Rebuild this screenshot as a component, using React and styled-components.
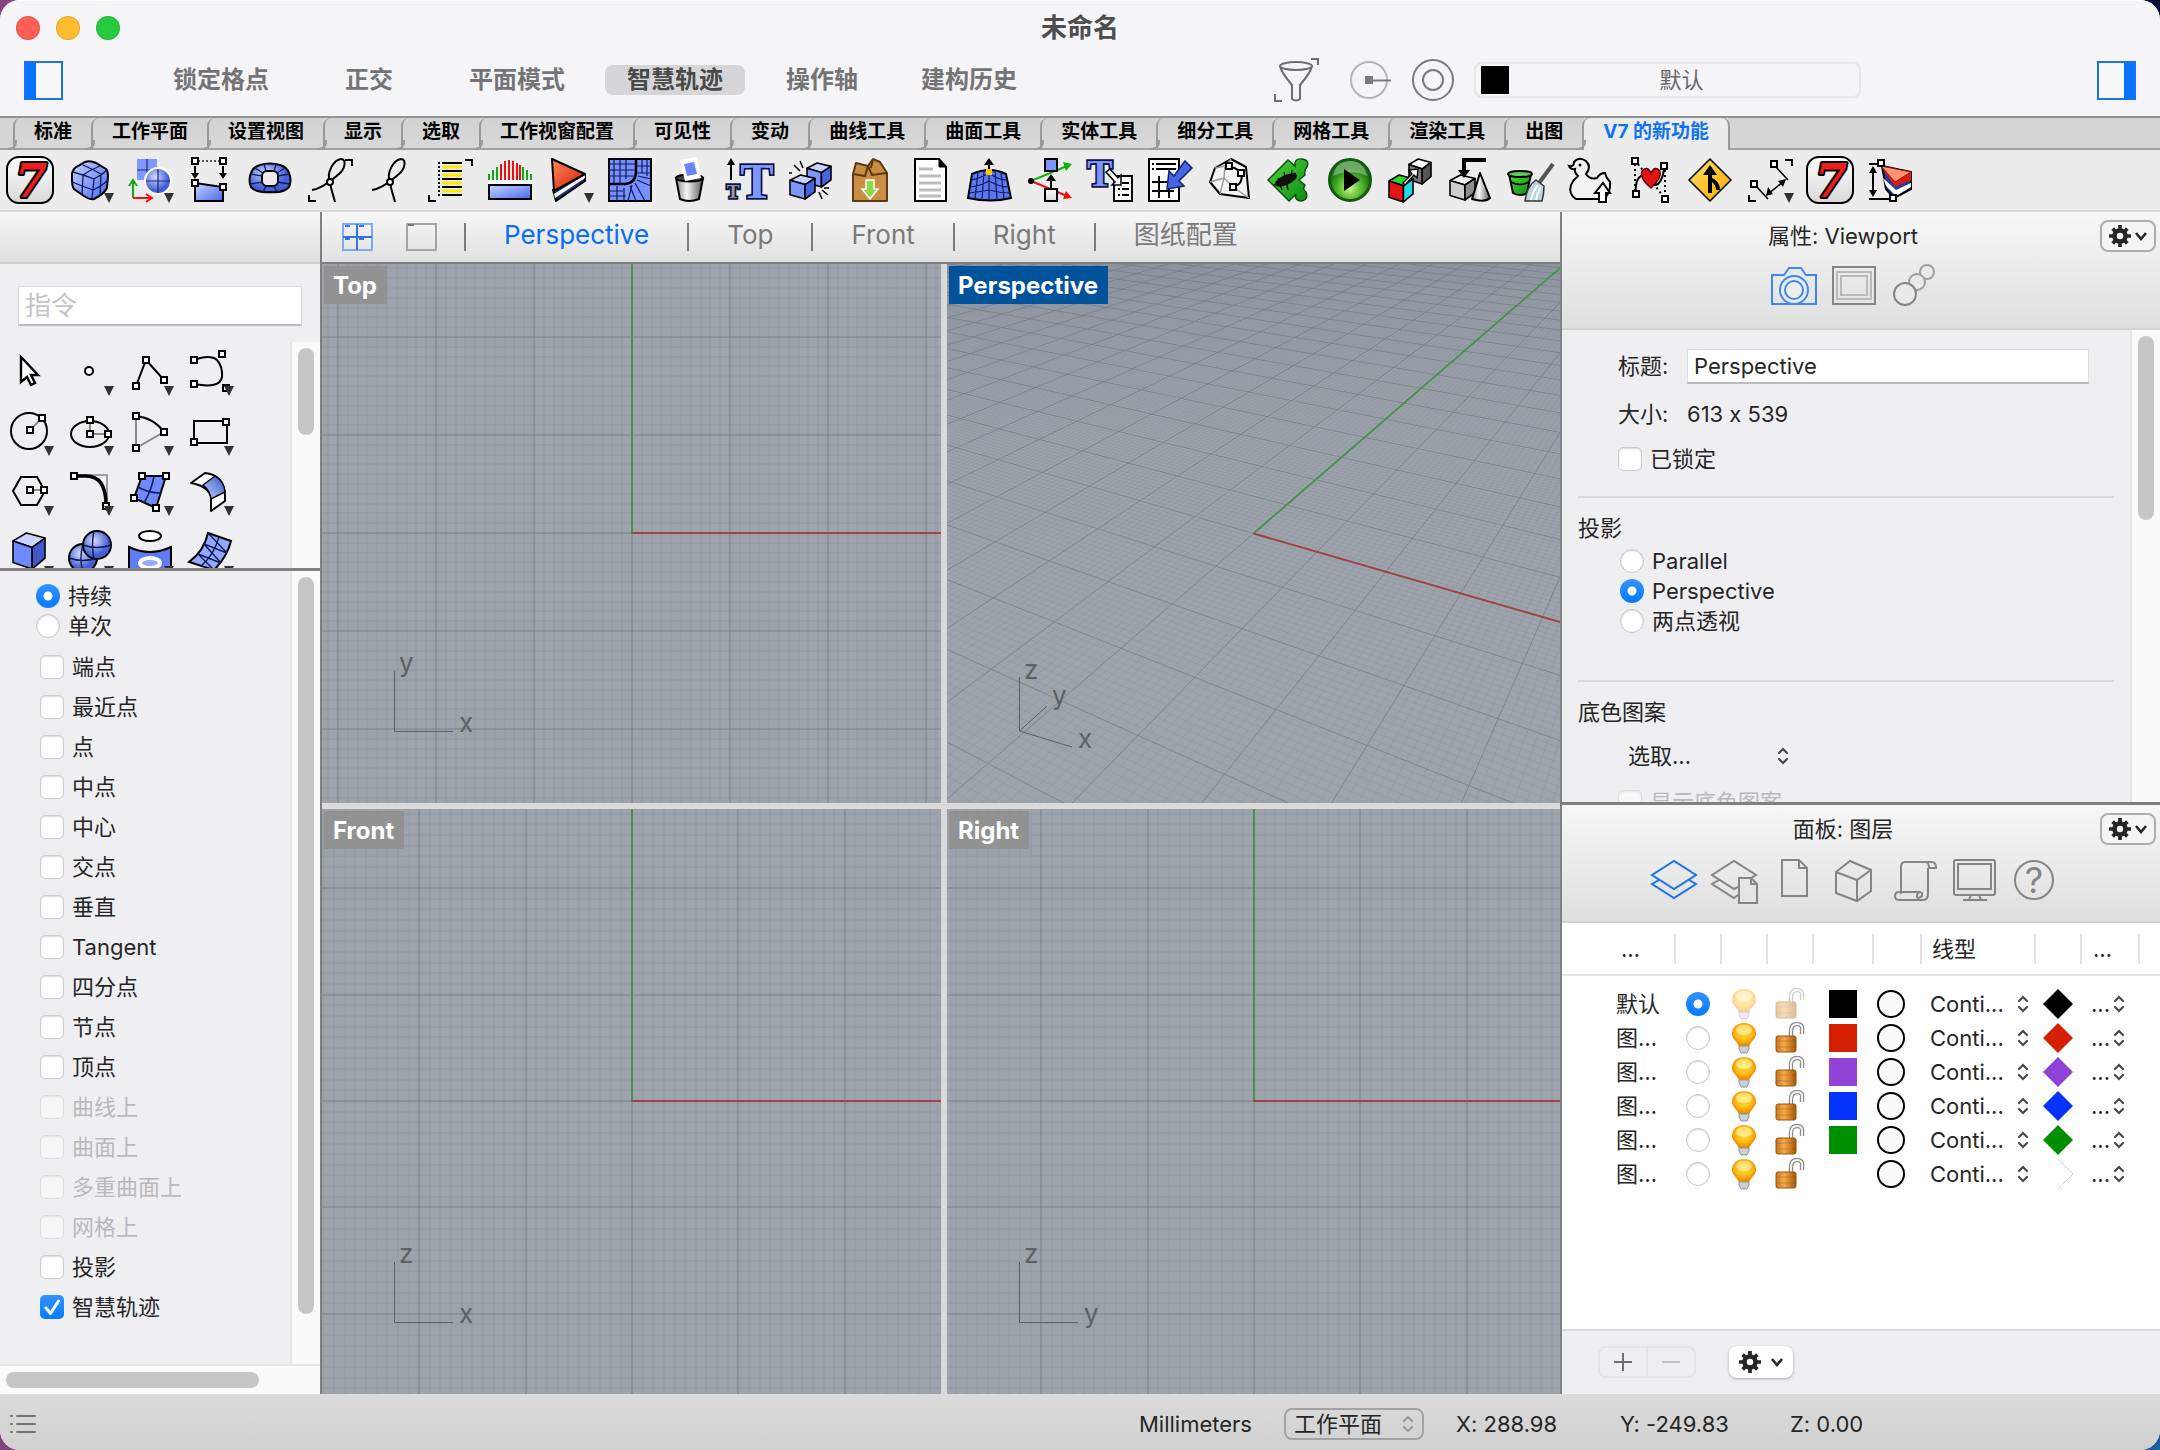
import { useId, useState } from "react";
import styled, { createGlobalStyle, css } from "styled-components";

const GlobalStyle = createGlobalStyle`
  * {
    box-sizing: border-box;
  }
  body {
    margin: 0;
    font-family: "Inter", "Noto Sans CJK SC", sans-serif;
    font-feature-settings: "calt" 0;
    font-size: 22px;
    line-height: 30px;
    color: #262626;
    background:
      radial-gradient(circle at 100% 100%, #1f6aa8 0, transparent 60px),
      linear-gradient(90deg, #84457f 50%, #0a0e38 50%);
  }
  button, input, select {
    font: inherit;
    color: inherit;
    margin: 0;
  }
  button {
    border: 0;
    padding: 0;
    background: none;
  }
`;

/* ---------- shell ---------- */

const Window = styled.div`
  min-height: 100vh;
  display: flex;
  flex-direction: column;
  border-radius: 20px;
  overflow: hidden;
  background: #efeff1;
`;

const TitleBar = styled.header`
  display: grid;
  grid-template-columns: 1fr auto 1fr;
  align-items: center;
  height: 54px;
  padding: 0 16px;
  background: #f5f4f7;
  border-top: 1px solid #fff;
`;

const Lights = styled.div`
  display: flex;
  gap: 16px;
`;

const Light = styled.button`
  width: 24px;
  height: 24px;
  border-radius: 50%;
  background: ${(props) => props.$color};
  box-shadow: inset 0 0 0 1px rgba(0, 0, 0, 0.1);
`;

const WindowTitle = styled.h1`
  margin: 0;
  font-size: 26px;
  font-weight: 700;
  color: #4d4d4d;
`;

const ModeBar = styled.div`
  display: flex;
  align-items: center;
  height: 62px;
  padding: 0 24px 10px;
  background: #f5f4f7;
`;

const PanelToggle = styled.button`
  width: 39px;
  height: 39px;
  border: 2px solid #1a73e8;
  background: linear-gradient(
    ${(props) => (props.$side === "left" ? "90deg" : "270deg")},
    #0a72ff 10px,
    #f8f8fa 10px
  );
`;

const Modes = styled.div`
  display: flex;
  gap: ${(props) => props.$gap};
  margin-left: ${(props) => props.$start};
`;

const ModeButton = styled.button`
  height: 30px;
  padding: 0 22px;
  border-radius: 8px;
  font-size: 24px;
  line-height: 28px;
  font-weight: 700;
  color: ${(props) => (props.$on ? "#4a4a4a" : "#747476")};
  background: ${(props) => (props.$on ? "#d6d6d8" : "transparent")};
`;

const ModeTools = styled.div`
  display: flex;
  align-items: center;
  gap: 20px;
  margin-left: auto;
  margin-right: 236px;

  > :first-child {
    margin-right: 10px;
  }
`;

const BareButton = styled.button`
  display: flex;
`;

const LayerField = styled.button`
  display: flex;
  align-items: center;
  width: 387px;
  height: 36px;
  padding: 0 5px;
  border: 2px solid #e6e6e9;
  border-radius: 8px;
  color: #68686a;

  span {
    flex: 1;
  }
`;

const Swatch = styled.i`
  display: block;
  width: 28px;
  height: 28px;
  background: ${(props) => props.$color};
`;

/* ---------- toolbar tabs ---------- */

const TabStrip = styled.nav`
  display: flex;
  height: 34px;
  padding-left: 13px;
  background: #d5d5d5;
  border-top: 2px solid #929292;
  box-shadow: inset 0 -2px #a0a0a0;
`;

const StripTab = styled.button`
  position: relative;
  height: 32px;
  padding: 0 19px 4px;
  font-size: 19px;
  font-weight: 700;
  line-height: 26px;
  color: ${(props) => (props.$on ? "#1273ef" : "#000")};
  border-left: 2px solid #999;
  border-top-left-radius: 8px;
  background: linear-gradient(#d2d2d2, #d8d8d8);
  box-shadow: inset 0 -2px #a0a0a0;

  &::before {
    content: "";
    position: absolute;
    left: -8px;
    bottom: 0;
    width: 8px;
    height: 8px;
    border: solid #999;
    border-width: 0 2px 2px 0;
    border-bottom-right-radius: 8px;
  }

  ${(props) =>
    props.$on &&
    css`
      background: #ececec;
      border-right: 2px solid #999;
      border-top-right-radius: 8px;
      box-shadow: none;
    `}
`;

const ToolStrip = styled.div`
  display: flex;
  height: 62px;
  padding: 6px 0 0 6px;
  gap: 12px;
  background: #ececec;
  border-bottom: 2px solid #d8d8d8;
`;

const IconSvg = styled.svg`
  display: block;
  width: 48px;
  height: 48px;
  overflow: visible;
`;

/* ---------- columns ---------- */

const Body = styled.div`
  flex: 1;
  display: flex;
  min-height: 0;
`;

const Sidebar = styled.aside`
  width: 322px;
  flex: none;
  display: flex;
  flex-direction: column;
  border-right: 2px solid #808080;
`;

const SidebarHead = styled.div`
  height: 52px;
  background: linear-gradient(#f7f7f7, #dfdfdf);
  border-bottom: 2px solid #cfcfcf;
`;

const CommandInput = styled.input`
  height: 40px;
  margin: 22px 18px 16px;
  padding: 0 6px;
  font-size: 26px;
  border: 1px solid #dcdcde;
  border-bottom: 2px solid #bcbcc0;
  background: #fff;
  outline: none;

  &::placeholder {
    color: #c4c4c6;
  }
`;

const ScrollArea = styled.div`
  display: flex;
  overflow: hidden;
  height: ${(props) => props.$height || "auto"};
  flex: ${(props) => (props.$height ? "none" : 1)};
`;

const ScrollBody = styled.div`
  flex: 1;
  min-width: 0;
`;

const Track = styled.div`
  width: 30px;
  padding: 6px 6px 0;
  border-left: 2px solid #e6e6e8;
  background: #fafafa;
`;

const Thumb = styled.div`
  width: 16px;
  height: ${(props) => props.$size};
  border-radius: 8px;
  background: #c6c6c6;
`;

const HorizontalTrack = styled.div`
  height: 30px;
  padding: 6px;
  border-top: 2px solid #e6e6e8;
  background: #fafafa;
`;

const HorizontalThumb = styled.div`
  width: 253px;
  height: 16px;
  border-radius: 8px;
  background: #c6c6c6;
`;

const ToolGrid = styled.div`
  display: grid;
  grid-template-columns: repeat(4, 48px);
  gap: 12px;
  padding: 5px 6px 0;
`;

const Divider = styled.div`
  height: 3px;
  flex: none;
  background: #808080;
`;

const SnapModes = styled.div`
  display: flex;
  flex-direction: column;
  padding: 10px 36px 6px;
`;

const SnapList = styled.div`
  display: flex;
  flex-direction: column;
  padding-left: 40px;
`;

/* ---------- form parts ---------- */

const Field = styled.label`
  display: flex;
  align-items: center;
  gap: 8px;
  height: ${(props) => props.$height || "30px"};
  color: ${(props) => (props.$dim ? "#b9b9bb" : "inherit")};
`;

const CheckBox = styled.input.attrs({ type: "checkbox" })`
  appearance: none;
  flex: none;
  width: 24px;
  height: 24px;
  border: 1px solid #cdcdcf;
  border-radius: 5px;
  background: #fff;
  box-shadow: inset 0 1px 2px rgba(0, 0, 0, 0.15);

  &:checked {
    border-color: transparent;
    box-shadow: none;
    background:
      url("data:image/svg+xml,%3Csvg xmlns='http://www.w3.org/2000/svg' viewBox='0 0 24 24'%3E%3Cpath d='M6 13l4.5 5.5L18.5 6' fill='none' stroke='white' stroke-width='3' stroke-linecap='round' stroke-linejoin='round'/%3E%3C/svg%3E"),
      linear-gradient(#3393ff, #067aff);
    background-origin: border-box;
  }

  &:disabled {
    opacity: 0.5;
  }
`;

const Radio = styled.input.attrs({ type: "radio" })`
  appearance: none;
  flex: none;
  width: 24px;
  height: 24px;
  border: 1px solid #c6c6c8;
  border-radius: 50%;
  background: #fff;
  box-shadow: inset 0 1px 2px rgba(0, 0, 0, 0.15);

  &:checked {
    border: 0;
    box-shadow: none;
    background: radial-gradient(circle, #fff 4px, transparent 5px),
      linear-gradient(#3393ff, #067aff);
  }
`;

const SelectBox = styled.div`
  display: flex;
  align-items: center;
  width: ${(props) => props.$width};
  height: 32px;

  select {
    appearance: none;
    flex: 1;
    min-width: 0;
    padding: 0;
    border: 0;
    outline: none;
    background: none;
  }

  svg {
    flex: none;
    pointer-events: none;
  }

  ${(props) =>
    props.$framed &&
    css`
      padding: 0 8px;
      border: 2px solid #a3a3a3;
      border-radius: 8px;
    `}
`;

const GearButton = styled.button`
  display: flex;
  align-items: center;
  justify-content: center;
  gap: ${(props) => (props.$raised ? "10px" : "4px")};
  width: ${(props) => (props.$raised ? "64px" : "56px")};
  height: 32px;
  border: ${(props) => (props.$raised ? "0" : "2px solid #adadad")};
  border-radius: 8px;
  background: ${(props) => (props.$raised ? "#fff" : "#f4f4f4")};
  box-shadow: ${(props) =>
    props.$raised ? "0 1px 3px rgba(0, 0, 0, 0.3)" : "none"};
`;

/* ---------- viewports ---------- */

const Center = styled.main`
  flex: 1;
  min-width: 0;
  display: flex;
  flex-direction: column;
`;

const ViewTabs = styled.nav`
  display: flex;
  align-items: center;
  height: 52px;
  padding-left: 20px;
  background: linear-gradient(#f7f7f7, #e1e1e1);
  border-bottom: 2px solid #808080;
`;

const LayoutButtons = styled.div`
  display: flex;
  gap: 33px;
  margin-right: 27px;
`;

const ViewTab = styled.button`
  height: 28px;
  padding: 0 38px 4px;
  border-left: 2px solid #7c7c7c;
  font-size: 26px;
  line-height: 20px;
  color: ${(props) => (props.$on ? "#0a6cf5" : "#7a7a7a")};
`;

const ViewGrid = styled.div`
  flex: 1;
  display: grid;
  grid-template-columns: 619fr 613fr;
  grid-template-rows: 539fr 585fr;
  gap: 6px;
  background: #dadada;
`;

const View = styled.section`
  position: relative;
  overflow: hidden;
  background: #9da3ab;

  > svg {
    position: absolute;
    inset: 0;
    width: 100%;
    height: 100%;
  }
`;

const ViewLabel = styled.h2`
  position: absolute;
  top: 2px;
  left: 2px;
  margin: 0;
  padding: 2px 10px 0 9px;
  font-size: 24px;
  line-height: 36px;
  font-weight: 700;
  color: #fff;
  background: ${(props) => (props.$on ? "#00529b" : "#929292")};
`;

const AxisText = styled.text`
  font-size: 26px;
  fill: #5d6065;
`;

/* ---------- right panels ---------- */

const Inspector = styled.aside`
  width: 600px;
  flex: none;
  display: flex;
  flex-direction: column;
  border-left: 2px solid #808080;
`;

const PanelHead = styled.div`
  flex: none;
  height: 118px;
  padding: 8px 4px 0 0;
  background: linear-gradient(#f7f7f7, #dfdfdf);
  border-bottom: 2px solid #d3d3d3;
`;

const PanelTitle = styled.div`
  display: flex;
  align-items: center;

  h2 {
    flex: 1;
    margin: 0;
    padding-left: 24px;
    text-align: center;
    font-size: 22px;
    font-weight: 400;
  }
`;

const PanelIcons = styled.div`
  display: flex;
  justify-content: center;
  gap: 12px;
  padding: 10px 10px 0 0;

  svg {
    fill: none;
    stroke: #858585;
    stroke-width: 2;
  }
`;

const Properties = styled.div`
  padding: 18px 16px 0;
`;

const PropRow = styled.div`
  display: grid;
  grid-template-columns: 69px 402px;
  align-items: center;
  height: ${(props) => props.$height};
  padding-left: 40px;
`;

const TextField = styled.input`
  height: 35px;
  padding: 0 6px;
  border: 1px solid #dedee0;
  border-bottom: 2px solid #bcbcc0;
  background: #fff;
  outline: none;
`;

const Indent = styled.div`
  display: flex;
  flex-direction: column;
  padding: ${(props) => props.$pad || "0 0 0 40px"};
`;

const Rule = styled.hr`
  width: 536px;
  margin: ${(props) => props.$margin};
  border: 0;
  border-top: 2px solid #d9d9db;
`;

const LayerPane = styled.div`
  flex: 1;
  background: #fff;
`;

const LayerTable = styled.table`
  width: 100%;
  table-layout: fixed;
  border-collapse: collapse;

  th {
    height: 52px;
    padding: 0;
    font-weight: 400;
    text-align: left;
    border-bottom: 2px solid #e2e2e2;
  }

  td {
    height: 34px;
    padding: 0;
    line-height: 28px;
    text-align: center;
    vertical-align: middle;
    white-space: nowrap;
  }

  thead + tbody::before {
    content: "";
    display: block;
    height: 11px;
  }
`;

const HeadCell = styled.div`
  height: 30px;
  padding-left: ${(props) => props.$pad || "0"};
  border-right: 2px solid #e3e3e3;
`;

const CellBox = styled.div`
  display: flex;
  align-items: center;
  justify-content: ${(props) => props.$align || "center"};
  padding-left: ${(props) => props.$pad || "0"};
  padding-right: 2px;
`;

const PrintDot = styled.i`
  display: block;
  width: 28px;
  height: 28px;
  border: 2px solid #000;
  border-radius: 50%;
  background: #fafafa;
`;

const PaneFoot = styled.div`
  display: flex;
  align-items: center;
  gap: 33px;
  height: 65px;
  padding: 0 0 2px 36px;
  border-top: 2px solid #d9d9db;
`;

const StepGroup = styled.div`
  display: flex;
  width: 98px;
  height: 32px;
  border: 2px solid #e3e3e5;
  border-radius: 8px;

  button {
    flex: 1;
    display: flex;
    align-items: center;
    justify-content: center;
  }

  button + button {
    border-left: 2px solid #e3e3e5;
  }
`;

const StatusBar = styled.footer`
  display: flex;
  align-items: center;
  height: 56px;
  padding: 4px 0 0 10px;
  background: linear-gradient(#dbdbdb, #d1d1d1);
`;

const StatusInfo = styled.div`
  display: flex;
  align-items: center;
  gap: 32px;
  margin-left: auto;
  width: 1021px;
`;

const Coord = styled.output`
  width: ${(props) => props.$width};
`;

/* ---------- shared drawing bits ---------- */

const Paints = () => (
  <svg width="0" height="0" style={{ position: "absolute" }} aria-hidden="true">
    <defs>
      <linearGradient id="blue" x1="0" y1="0" x2="1" y2="1">
        <stop offset="0" stopColor="#c9d4ff" />
        <stop offset="1" stopColor="#4a68ee" />
      </linearGradient>
      <linearGradient id="blueRev" x1="1" y1="0" x2="0" y2="1">
        <stop offset="0" stopColor="#3450c8" />
        <stop offset="1" stopColor="#cdd8ff" />
      </linearGradient>
      <linearGradient id="steel" x1="0" y1="0" x2="1" y2="0">
        <stop offset="0" stopColor="#8a8a8a" />
        <stop offset="0.4" stopColor="#f6f6f6" />
        <stop offset="1" stopColor="#5a5a5a" />
      </linearGradient>
      <linearGradient id="paper" x1="0" y1="0" x2="0" y2="1">
        <stop offset="0" stopColor="#fff" />
        <stop offset="1" stopColor="#d8d8d8" />
      </linearGradient>
      <linearGradient id="red" x1="0" y1="0" x2="1" y2="1">
        <stop offset="0" stopColor="#ff8a5c" />
        <stop offset="1" stopColor="#d81800" />
      </linearGradient>
      <linearGradient id="green" x1="0" y1="0" x2="1" y2="1">
        <stop offset="0" stopColor="#4fd83a" />
        <stop offset="1" stopColor="#0c8a12" />
      </linearGradient>
      <radialGradient id="play" cx="0.5" cy="0.7">
        <stop offset="0" stopColor="#c8f58a" />
        <stop offset="0.6" stopColor="#4fb52c" />
        <stop offset="1" stopColor="#1b7a12" />
      </radialGradient>
      <radialGradient id="ball" cx="0.4" cy="0.35">
        <stop offset="0" stopColor="#d5deff" />
        <stop offset="1" stopColor="#4560d6" />
      </radialGradient>
      <linearGradient id="sign" x1="0" y1="0" x2="1" y2="1">
        <stop offset="0" stopColor="#ffe066" />
        <stop offset="1" stopColor="#f5a800" />
      </linearGradient>
      <radialGradient id="bulb" cx="0.5" cy="0.4">
        <stop offset="0" stopColor="#ffe14d" />
        <stop offset="0.7" stopColor="#fdb813" />
        <stop offset="1" stopColor="#f08c00" />
      </radialGradient>
      <linearGradient id="brass" x1="0" y1="0" x2="1" y2="0">
        <stop offset="0" stopColor="#c8741a" />
        <stop offset="0.4" stopColor="#f3ac4c" />
        <stop offset="1" stopColor="#a85608" />
      </linearGradient>
    </defs>
  </svg>
);

const Drop = ({ y = 37 }) => (
  <path d={`M38 ${y}h10l-5 10z`} fill="#333" stroke="none" />
);

const Node = ({ x, y }) => (
  <rect
    x={x - 3}
    y={y - 3}
    width="6"
    height="6"
    fill="#fff"
    stroke="#000"
    strokeWidth="2"
  />
);

const Brackets = () => (
  <path d="M39 4h7v6M3 39v6h7" fill="none" stroke="#000" strokeWidth="2" />
);

const Cube = ({ x, y, w, h, top = "#c9d4ff", left = "#7d95ff", right = "#4862e0" }) => (
  <g stroke="#000" strokeWidth="1.6" strokeLinejoin="round">
    <path
      d={`M${x} ${y + h * 0.22}L${x + w * 0.42} ${y}L${x + w} ${y + h * 0.14}L${x + w * 0.6} ${y + h * 0.4}z`}
      fill={top}
    />
    <path
      d={`M${x} ${y + h * 0.22}L${x + w * 0.6} ${y + h * 0.4}V${y + h}L${x} ${y + h * 0.82}z`}
      fill={left}
    />
    <path
      d={`M${x + w * 0.6} ${y + h * 0.4}L${x + w} ${y + h * 0.14}V${y + h * 0.7}L${x + w * 0.6} ${y + h}z`}
      fill={right}
    />
  </g>
);

const Letter = ({ x, y, size, fill, children }) => (
  <text
    x={x}
    y={y}
    fontSize={size}
    fontFamily="'Liberation Serif', serif"
    fontWeight="700"
    textAnchor="middle"
    fill={fill}
    stroke="#0b1440"
    strokeWidth="3.4"
    paintOrder="stroke"
  >
    {children}
  </text>
);

const Seven = () => (
  <>
    <rect x="1" y="1" width="46" height="46" rx="12" fill="url(#paper)" stroke="#000" strokeWidth="2" />
    <text
      x="25"
      y="41"
      fontSize="46"
      fontFamily="'DejaVu Serif', serif"
      fontStyle="italic"
      fontWeight="700"
      textAnchor="middle"
      fill="#ee1c1c"
      stroke="#000"
      strokeWidth="4"
      strokeLinejoin="round"
      paintOrder="stroke"
    >
      7
    </text>
  </>
);

const Leaf = () => (
  <>
    <path
      d="M24 26C20 16 28 4 35 3C41 3 39 13 33 18C28 22 18 32 6 34M24 26C25 34 27 38 29 46"
      fill="none"
      stroke="#000"
      strokeWidth="2"
    />
    <circle cx="24" cy="26" r="3" fill="#fff" stroke="#000" strokeWidth="2" />
  </>
);

/* ---------- toolbar icons, each on a 48 unit square ---------- */

const toolIcons = [
  ["V7", <Seven />],
  [
    "SubD box",
    <>
      <path
        d="M6 18Q7 12 12 10L19 6Q24 4 30 7L40 13Q42 15 42 20L41 32Q38 38 28 43Q24 44 18 40L8 33Q6 30 6 24z"
        fill="url(#blue)"
        stroke="#000"
        strokeWidth="2"
      />
      <path
        d="M7 16Q18 19 28 23Q36 19 41 14M28 23L26 43M15 8Q24 12 35 18L34 40M34 10Q24 14 17 19L16 39M6 26Q16 30 27 34Q36 30 42 24"
        fill="none"
        stroke="#0d1c60"
        strokeWidth="1.3"
      />
      <Drop />
    </>,
  ],
  [
    "Gumball",
    <>
      <rect x="11" y="3" width="20" height="21" fill="#7f98ff" />
      <path d="M11 14h20M21 3v21" stroke="#1a2a7a" strokeWidth="1.2" />
      <circle cx="32" cy="25" r="13" fill="url(#ball)" stroke="#fff" strokeWidth="2" />
      <path d="M20 25h24M32 13v24" stroke="#1a2a7a" strokeWidth="1.2" />
      <path d="M7 42V25M3 30l4-6 4 6" fill="none" stroke="#14a814" strokeWidth="2" />
      <path d="M7 42h18M20 38l6 4-6 4" fill="none" stroke="#f01010" strokeWidth="2" />
      <Drop />
    </>,
  ],
  [
    "Extrude to boundary",
    <>
      <path d="M12 5h22" stroke="#555" strokeWidth="2" strokeDasharray="2 2" />
      <path d="M9 10v10M37 10v10" stroke="#000" strokeWidth="2" />
      <path d="M5 17h8l-4 6zM33 17h8l-4 6z" />
      <path d="M9 27L37 31V45H9z" fill="url(#blue)" stroke="#000" strokeWidth="2" />
      <Node x={9} y={5} />
      <Node x={37} y={5} />
      <Node x={9} y={27} />
      <Node x={37} y={31} />
    </>,
  ],
  [
    "Ring",
    <>
      <path
        d="M14 9Q24 6 34 9Q41 11 43 17Q46 24 43 31Q38 37 24 36Q10 37 5 31Q2 24 5 17Q7 11 14 9z"
        fill="url(#ball)"
        stroke="#000"
        strokeWidth="2"
      />
      <rect x="16" y="15" width="16" height="15" rx="5" fill="#ececec" stroke="#000" strokeWidth="2" />
      <path
        d="M18 8l2 7M30 8l-2 7M5 18l11 2M43 18l-11 2M4 28l13-2M44 28l-13-2M17 36l3-6M31 36l-3-6M9 12l8 5M39 12l-8 5"
        stroke="#0d1c60"
        strokeWidth="1.3"
      />
    </>,
  ],
  [
    "Select curve",
    <>
      <Leaf />
      <Brackets />
    </>,
  ],
  ["Curve", <Leaf />],
  [
    "Select list",
    <>
      <path d="M16 7h20M16 15h20M16 23h20M16 31h20M16 39h20" stroke="#000" strokeWidth="2" />
      <path d="M16 11h20M16 19h20M16 27h20M16 35h20" stroke="#ffe800" strokeWidth="3" />
      <path d="M13 6v35" stroke="#000" strokeWidth="2" strokeDasharray="2 2" />
      <Brackets />
    </>,
  ],
  [
    "Curvature",
    <>
      <path d="M3 24v-6M7 24V14M11 24V11M37 24V11M41 24V14M45 24v-6" stroke="#12a812" strokeWidth="2" />
      <path d="M15 24V8M19 24V5M23 24V4M27 24V5M31 24V7M34 24V9" stroke="#ee1010" strokeWidth="2" />
      <rect x="2" y="24" width="44" height="4" fill="#fff" />
      <rect x="3" y="29" width="42" height="14" fill="url(#blue)" stroke="#000" strokeWidth="2" />
    </>,
  ],
  [
    "Draft",
    <>
      <path d="M7 34L10 45L39 25V18z" fill="#1b2e8a" stroke="#000" strokeWidth="2" strokeLinejoin="round" />
      <path d="M8 38L9 42L39 22V19z" fill="#fff" />
      <path d="M6 3L39 18L8 35z" fill="url(#red)" stroke="#000" strokeWidth="2" strokeLinejoin="round" />
      <Drop />
    </>,
  ],
  [
    "Fillet surface",
    <>
      <rect x="3" y="3" width="42" height="42" fill="#7690ff" stroke="#000" strokeWidth="2" />
      <path
        d="M8 3v25M14 3v24M20 3v20M3 8h26M3 14h26M3 20h25M36 3v14M41 3v17M31 10h14M31 17h14M3 35h14M3 40h17M11 30v15M18 32v13M26 29l-4 16M31 24l14 6M29 27l10 18M32 20l13 3M24 30l6 15"
        stroke="#101c58"
        strokeWidth="1.2"
        fill="none"
      />
      <path d="M3 28h16Q30 27 30 15V3" fill="none" stroke="#000" strokeWidth="2.5" />
    </>,
  ],
  [
    "Purge",
    <>
      <path d="M10 22l4 21q9 4 19 0l4-21z" fill="url(#steel)" stroke="#000" strokeWidth="2" />
      <ellipse cx="23.5" cy="22" rx="13.5" ry="3.5" fill="#444" stroke="#000" strokeWidth="2" />
      <path d="M14 4L31 1L35 22L19 25z" fill="#fff" />
      <path d="M18 8L28 6L31 18L21 20z" fill="#6a86ff" />
    </>,
  ],
  [
    "Text height",
    <>
      <path d="M5 24V5" stroke="#000" strokeWidth="2" />
      <path d="M1 9h8L5 2z" />
      <Letter x={31} y={42} size={50} fill="#7d95ff">T</Letter>
      <Letter x={7} y={42} size={19} fill="#999">T</Letter>
    </>,
  ],
  [
    "Explode block",
    <>
      <Cube x={21} y={7} w={24} h={24} />
      <Cube x={4} y={19} w={25} h={24} />
      <path d="M14 15L8 9M17 12L14 5M6 17H3M33 36l3 7M36 34l6 5M38 32h5" stroke="#000" strokeWidth="1.5" />
    </>,
  ],
  [
    "Package",
    <>
      <path d="M7 18L10 7L22 10L27 3L34 6L41 17V45H7z" fill="#c98e43" stroke="#5a3a10" strokeWidth="2" strokeLinejoin="round" />
      <path d="M7 18L19 20L22 10M22 10L26 19L41 17M27 3L25 12" fill="none" stroke="#5a3a10" strokeWidth="2" />
      <path d="M20 24h8v9h4l-8 10-8-10h4z" fill="#8ed84a" stroke="#fff" strokeWidth="1.5" />
    </>,
  ],
  [
    "Document",
    <>
      <path d="M9 3h24l7 8v34H9z" fill="#fff" stroke="#000" strokeWidth="2" />
      <path d="M33 3v8h7z" stroke="#000" />
      <path d="M13 13h14M13 20h22M13 27h22M13 34h22M13 40h22" stroke="#bdbdbd" strokeWidth="3" />
    </>,
  ],
  [
    "Push pull",
    <>
      <path d="M6 18q18-8 34 0l5 24q-20 5-43 0z" fill="#5a76f0" stroke="#000" strokeWidth="2" />
      <path
        d="M5 24q8-1 18-7q9 7 19 7M4 31q10-1 19-6q10 6 20 6M3 37q10-1 20-3q11 3 21 3M12 16L9 43M18 15l-2 29M23 15v29M29 15l2 29M35 16l3 27"
        fill="none"
        stroke="#101c58"
        strokeWidth="1.2"
      />
      <path d="M23 13V6" stroke="#000" strokeWidth="2" />
      <path d="M18 9h10l-5-7z" />
      <rect x="20" y="13" width="6" height="6" fill="#ffc400" />
    </>,
  ],
  [
    "Orient",
    <>
      <path d="M5 25L41 10" stroke="#12b012" strokeWidth="2" />
      <path d="M37 6l9 2-6 7z" fill="#12b012" />
      <path d="M5 25L41 40" stroke="#f01010" strokeWidth="2" />
      <path d="M40 35l6 7-9 1z" fill="#f01010" />
      <path d="M25 33V23" stroke="#000" strokeWidth="2" />
      <path d="M20 25h10l-5-7z" />
      <rect x="19" y="3" width="12" height="12" fill="#7d95ff" stroke="#000" strokeWidth="2" />
      <rect x="19" y="33" width="12" height="12" fill="url(#paper)" stroke="#000" strokeWidth="2" />
      <circle cx="5" cy="25" r="3" />
    </>,
  ],
  [
    "Text properties",
    <>
      <Letter x={14} y={30} size={38} fill="#7d95ff">T</Letter>
      <rect x="28" y="20" width="18" height="25" fill="#fff" stroke="#000" strokeWidth="2" />
      <path d="M32 27h2M36 27h7M32 33h2M36 33h7M32 39h2M36 39h7" stroke="#000" strokeWidth="2" />
      <path d="M20 16l4-3 8 9 3-3v10h-9l3-3z" fill="#fff" stroke="#000" strokeWidth="1.5" />
    </>,
  ],
  [
    "Hatch layout",
    <>
      <rect x="3" y="3" width="30" height="42" fill="#fff" stroke="#000" strokeWidth="2" />
      <path d="M6 8h2M10 8h20M6 13h2M10 13h20" stroke="#000" strokeWidth="2" />
      <path d="M6 26h22M6 35h22M13 20v22M23 20v22" stroke="#000" strokeWidth="2" />
      <path d="M39 5l7 7-13 13 5 5-17 3 2-18 5 5z" fill="#4666e8" stroke="#14256e" strokeWidth="1.5" />
    </>,
  ],
  [
    "Mesh",
    <>
      <path
        d="M9 12L25 3L40 11L43 42L14 38L4 26z"
        fill="#f4f4f4"
        stroke="#000"
        strokeWidth="2"
        strokeLinejoin="round"
      />
      <path d="M9 12L19 10L25 3M4 26L18 22L14 38M19 10L18 22L27 31L43 42" fill="none" stroke="#999" strokeWidth="1.4" />
      <path d="M23 11Q30 11 35 17M35 17Q38 28 27 31" fill="none" stroke="#000" strokeWidth="2" />
      <Node x={23} y={10} />
      <Node x={35} y={17} />
      <Node x={27} y={31} />
    </>,
  ],
  [
    "Plug-in",
    <>
      <path
        d="M2 24L22 4L29 10Q28 2 36 3Q44 4 41 11Q38 14 39 19L33 24L39 29Q36 33 40 36Q43 44 35 45Q28 44 30 38L23 45L16 38L10 32z"
        fill="url(#green)"
        stroke="#0a4a0a"
        strokeWidth="1.4"
      />
      <ellipse cx="20" cy="24" rx="12" ry="5" transform="rotate(-25 20 24)" fill="#111" />
      <path d="M12 22l4 12M18 16l4 18M26 14l-1 12M8 29l22-12" stroke="#111" strokeWidth="1.4" />
    </>,
  ],
  [
    "Run",
    <>
      <circle cx="24" cy="24" r="20.5" fill="url(#play)" stroke="#145a10" strokeWidth="3" />
      <path d="M7 20Q10 5 24 5Q38 5 41 20Q24 12 7 20z" fill="#fff" opacity="0.35" />
      <path d="M18 13L34 24L18 35z" />
    </>,
  ],
  [
    "Match mapping",
    <>
      <Cube x={23} y={3} w={22} h={25} top="#fff" left="#777" right="#555" />
      <Cube x={3} y={19} w={24} h={27} top="#2ad82a" left="#e81414" right="#22d8e8" />
      <path d="M17 27l9-9-3-4 9-1-1 9-3-3-9 10z" fill="#fff" stroke="#000" strokeWidth="1.4" />
    </>,
  ],
  [
    "Paste solids",
    <>
      <Cube x={4} y={19} w={25} h={25} top="#f2f2f2" left="#cfcfcf" right="#8f8f8f" />
      <path d="M34 17L44 42Q39 47 26 43z" fill="url(#steel)" stroke="#000" strokeWidth="2" strokeLinejoin="round" />
      <path d="M40 4H18V16" fill="none" stroke="#000" strokeWidth="4" />
      <path d="M12 14h12l-6 8z" />
    </>,
  ],
  [
    "Paint",
    <>
      <path d="M3 18L7 37Q14 41 21 37L25 18z" fill="url(#green)" stroke="#000" strokeWidth="2" />
      <ellipse cx="14" cy="18" rx="12" ry="3" fill="#58d058" stroke="#000" strokeWidth="2" />
      <path d="M5 26q9 5 18 0" fill="none" stroke="#000" strokeWidth="1.5" />
      <path d="M47 8L33 27" stroke="#555" strokeWidth="4" />
      <path d="M30 24l8 6q0 8-2 15H19q2-15 11-21z" fill="#b9d4da" stroke="#333" strokeWidth="1.5" />
      <path d="M32 29q-5 6-7 15M35 31q-4 6-5 13" fill="none" stroke="#fff" strokeWidth="2" />
    </>,
  ],
  [
    "Export model",
    <>
      <path
        d="M3 10Q8 11 8 6Q13 0 20 5Q26 11 20 18Q24 24 31 22Q34 17 39 17Q40 22 44 26Q45 36 38 43H10Q2 38 5 29Q7 24 12 20Q8 16 9 13Q5 14 3 10z"
        fill="#f2f2f2"
        stroke="#000"
        strokeWidth="2"
      />
      <circle cx="14" cy="9" r="1.5" />
      <path d="M37 27l7 10h-4v9h-7v-9h-4z" fill="#fff" stroke="#000" strokeWidth="2" />
    </>,
  ],
  [
    "Match curve",
    <>
      <path d="M9 8v26M12 8L37 40M39 14v26" stroke="#000" strokeWidth="2" strokeDasharray="2 3" />
      <path d="M10 38Q8 20 20 18Q24 32 32 28Q38 22 38 10" fill="none" stroke="#000" strokeWidth="2" />
      <path d="M25 32Q13 22 16 15Q21 9 25 17Q29 9 34 15Q36 22 25 32z" fill="#e01414" stroke="#500" strokeWidth="1.4" />
      <Node x={9} y={5} />
      <Node x={38} y={10} />
      <Node x={10} y={38} />
      <Node x={39} y={43} />
    </>,
  ],
  [
    "Merge",
    <>
      <path d="M24 3L45 24L24 45L3 24z" fill="url(#sign)" stroke="#000" strokeWidth="1.6" strokeLinejoin="round" />
      <path d="M24 37V16M32 34Q32 26 24 23" fill="none" stroke="#000" strokeWidth="4" />
      <path d="M17 19h14l-7-10z" />
    </>,
  ],
  [
    "Distance",
    <>
      <path d="M30 11L42 24M10 30L22 43M38 25L22 38" stroke="#000" strokeWidth="1.6" fill="none" />
      <path d="M40 23l-8 2 5 6zM20 40l2-9 5 7z" />
      <Node x={28} y={8} />
      <Node x={8} y={28} />
      <Brackets />
      <Drop />
    </>,
  ],
  ["V7", <Seven />],
  [
    "Section",
    <>
      <path d="M3 8h11M3 43h22M7 14v23" stroke="#000" strokeWidth="2" />
      <path d="M3 17l4-7 4 7zM3 34l4 7 4-7z" />
      <path d="M16 10L20 33L28 42L45 33V16z" fill="#1b3fa8" stroke="#000" strokeWidth="2" strokeLinejoin="round" />
      <path d="M17 22L30 34L45 27V31L30 40L20 30z" fill="#fff" />
      <path d="M16 12L29 31L45 24V16z" fill="#dc1c0c" />
      <path d="M15 10L45 16L29 26z" fill="#ff9470" stroke="#a81000" strokeWidth="1" />
      <Node x={15} y={7} />
      <Node x={27} y={42} />
    </>,
  ],
];

/* ---------- sidebar tool icons ---------- */

const sideIcons = [
  ["Select", false, <path d="M15 10v25l6-5 4 8 4-2-4-8h7z" fill="#fff" stroke="#000" strokeWidth="2.4" />],
  ["Point", true, <circle cx="23" cy="24" r="4" fill="#fff" stroke="#000" strokeWidth="2" />],
  [
    "Polyline",
    true,
    <>
      <path d="M10 39L20 13L38 33" fill="none" stroke="#000" strokeWidth="2" />
      <Node x={10} y={39} />
      <Node x={20} y={13} />
      <Node x={38} y={33} />
    </>,
  ],
  [
    "Curve",
    true,
    <>
      <path d="M8 13Q24 7 31 13Q37 20 36 30Q34 42 8 37" fill="none" stroke="#000" strokeWidth="2" />
      <Node x={8} y={13} />
      <Node x={36} y={7} />
      <Node x={8} y={37} />
      <Node x={40} y={41} />
    </>,
  ],
  [
    "Circle",
    true,
    <>
      <circle cx="23" cy="24" r="18" fill="none" stroke="#000" strokeWidth="2" />
      <path d="M24 23L36 11" stroke="#888" strokeWidth="2" />
      <Node x={24} y={23} />
      <Node x={36} y={11} />
    </>,
  ],
  [
    "Ellipse",
    true,
    <>
      <ellipse cx="24" cy="27" rx="19" ry="13" fill="none" stroke="#000" strokeWidth="2" />
      <path d="M24 13v14h18" fill="none" stroke="#888" strokeWidth="2" />
      <Node x={24} y={13} />
      <Node x={24} y={27} />
      <Node x={42} y={27} />
    </>,
  ],
  [
    "Arc",
    true,
    <>
      <path d="M10 9v32l28-16" fill="none" stroke="#888" strokeWidth="2" />
      <path d="M10 9Q28 11 38 25" fill="none" stroke="#000" strokeWidth="2" />
      <Node x={10} y={9} />
      <Node x={10} y={41} />
      <Node x={38} y={25} />
    </>,
  ],
  [
    "Rectangle",
    true,
    <>
      <rect x="8" y="14" width="33" height="22" fill="none" stroke="#000" strokeWidth="2" />
      <Node x={8} y={35} />
      <Node x={40} y={15} />
    </>,
  ],
  [
    "Polygon",
    true,
    <>
      <path d="M7 24L15 10H31L39 24L31 38H15z" fill="none" stroke="#000" strokeWidth="2" />
      <path d="M24 23h14" stroke="#888" strokeWidth="2" />
      <Node x={24} y={23} />
      <Node x={38} y={23} />
    </>,
  ],
  [
    "Fillet",
    true,
    <>
      <path d="M8 8h33v32" fill="none" stroke="#888" strokeWidth="1.6" />
      <path d="M8 9H20Q40 9 40 38" fill="none" stroke="#000" strokeWidth="3.5" />
      <Node x={8} y={9} />
      <Node x={40} y={39} />
    </>,
  ],
  [
    "Surface from points",
    true,
    <>
      <path d="M16 9H40L30 41L8 31z" fill="#6f8aff" stroke="#000" strokeWidth="2" />
      <path d="M28 9Q26 22 18 36M12 20Q22 26 35 26" fill="none" stroke="#101c58" strokeWidth="1.6" />
      <Node x={16} y={9} />
      <Node x={40} y={9} />
      <Node x={8} y={31} />
      <Node x={30} y={41} />
    </>,
  ],
  [
    "Loft",
    true,
    <>
      <path d="M5 16L19 6Q38 8 39 28V34L25 44V30Q22 19 5 16z" fill="#fff" stroke="#000" strokeWidth="2" strokeLinejoin="round" />
      <path d="M17 18L29 9Q38 14 39 25L25 32Q24 23 17 18z" fill="url(#blueRev)" stroke="#000" strokeWidth="1.4" />
    </>,
  ],
  ["Box", true, <Cube x={7} y={6} w={32} h={36} left="#6f8aff" right="#3f58cc" />],
  [
    "Sphere union",
    true,
    <>
      <circle cx="17" cy="31" r="14" fill="url(#ball)" stroke="#000" strokeWidth="2" />
      <path d="M3 31q14 5 28 0M17 17q-4 14 0 28" fill="none" stroke="#101c58" strokeWidth="1.4" />
      <circle cx="31" cy="18" r="14" fill="url(#ball)" stroke="#000" strokeWidth="2" />
      <path d="M17 18q14 5 28 0M28 4q-3 14 0 28" fill="none" stroke="#101c58" strokeWidth="1.4" />
    </>,
  ],
  [
    "Project",
    true,
    <>
      <ellipse cx="24" cy="9" rx="11" ry="5" fill="#fff" stroke="#000" strokeWidth="2" />
      <path d="M3 20q21 10 42 0v26H3z" fill="#5f7bf2" stroke="#000" strokeWidth="2" />
      <ellipse cx="24" cy="36" rx="10" ry="5" fill="#93a8ff" stroke="#fff" strokeWidth="4" />
    </>,
  ],
  [
    "Mesh patch",
    true,
    <>
      <path d="M22 6L45 14Q41 30 28 43L3 35Q18 24 22 6z" fill="#93a8ff" stroke="#000" strokeWidth="2" />
      <path d="M33 10Q28 28 15 39M18 17L41 26M12 27L35 36M22 6L41 26M18 17L35 36M12 27L28 43" fill="none" stroke="#101c58" strokeWidth="1.4" />
    </>,
  ],
];

/* ---------- small glyphs ---------- */

const Gear = () => (
  <svg width="22" height="24" viewBox="-12 -12 24 24" aria-hidden="true">
    <circle r="6" fill="none" stroke="#262626" strokeWidth="5" />
    <path
      d="M0-12V-6M0 12V6M-12 0H-6M12 0H6M-8-8L-5-5M8 8L5 5M-8 8L-5 5M8-8L5-5"
      stroke="#262626"
      strokeWidth="4"
    />
  </svg>
);

const Chevron = () => (
  <svg width="12" height="10" viewBox="0 0 12 10" aria-hidden="true">
    <path d="M1 2l5 6 5-6" fill="none" stroke="#262626" strokeWidth="2.6" />
  </svg>
);

const UpDown = ({ color = "#4a4a4a" }) => (
  <svg width="12" height="18" viewBox="0 0 12 18" aria-hidden="true">
    <path
      d="M2 6l4-4 4 4M2 12l4 4 4-4"
      fill="none"
      stroke={color}
      strokeWidth="2.2"
      strokeLinecap="round"
    />
  </svg>
);

const Bulb = ({ dim }) => (
  <svg width="26" height="32" viewBox="0 0 26 32" opacity={dim ? 0.4 : 1} role="img" aria-label="On">
    <path
      d="M13 1C5 1 1 6 1 12c0 5 6 8 7 13h10c1-5 7-8 7-13C25 6 21 1 13 1z"
      fill="url(#bulb)"
    />
    <ellipse cx="13" cy="8" rx="8" ry="5" fill="#fff6b0" opacity="0.6" />
    <path d="M8 24h10v3l-2 4h-6l-2-4z" fill="#c9d0d8" stroke="#8d959e" strokeWidth="1" />
  </svg>
);

const Lock = ({ dim }) => (
  <svg width="30" height="32" viewBox="0 0 30 32" opacity={dim ? 0.4 : 1} role="img" aria-label="Unlocked">
    <path d="M16 14V9q0-7 6-7t5 6v4" fill="none" stroke="#8c8c8c" strokeWidth="4.4" />
    <path d="M16 14V9q0-7 6-7t5 6v4" fill="none" stroke="#f2f2f2" strokeWidth="2" />
    <rect x="1" y="14" width="20" height="16" rx="2" fill="url(#brass)" stroke="#99540c" strokeWidth="1" />
    <path d="M1 19h20M1 25h20" stroke="#8f4c08" strokeWidth="1" opacity="0.35" />
  </svg>
);

/* ---------- viewport drawings ---------- */

const crisp = (n) => Math.round(n) - 0.5;

const flatGrid = (major, every) => {
  let d = "";
  const step = major / 10;
  for (let i = -120; i <= 120; i++) {
    const isMajor = i % 10 === 0;
    if (isMajor !== every) continue;
    const p = crisp(i * step);
    d += `M${p + 1}-1300V1300M-1300 ${p}H1300`;
  }
  return d;
};

const AxisMark = ({ up, across }) => (
  <svg x="72" y="100%" overflow="visible">
    <path d="M0.5 -132V-71.5H59" fill="none" stroke="#5d6065" />
    <AxisText x="5" y="-131">{up}</AxisText>
    <AxisText x="65" y="-71">{across}</AxisText>
  </svg>
);

const FlatView = ({ title, major, up, across }) => (
  <View>
    <svg aria-hidden="true">
      <svg x="50%" y="50%" overflow="visible">
        <path d={flatGrid(major, false)} stroke="#7f8791" strokeOpacity="0.34" />
        <path d={flatGrid(major, true)} stroke="#6b727a" strokeOpacity="0.7" />
        <path d="M0.5 0V-1300" stroke="#4a9150" strokeWidth="2" />
        <path d="M0 -0.5H1300" stroke="#a04246" strokeWidth="2" />
      </svg>
      <AxisMark up={up} across={across} />
    </svg>
    <ViewLabel>{title}</ViewLabel>
  </View>
);

// camera sits at azimuth -60, elevation 30, looking at the origin
const FOCAL = 786;
const DISTANCE = 11.15;

const depthAt = (x, y) => DISTANCE - 0.433 * x + 0.75 * y;

const project = (x, y) => {
  const k = FOCAL / depthAt(x, y);
  return `${((0.866 * x + 0.5 * y) * k).toFixed(1)} ${((0.25 * x - 0.433 * y) * k).toFixed(1)}`;
};

const clipLine = (a, b) => {
  const near = 2;
  const da = depthAt(...a) - near;
  const db = depthAt(...b) - near;
  if (da < 0 && db < 0) return "";
  const t = da / (da - db);
  const cut = [a[0] + (b[0] - a[0]) * t, a[1] + (b[1] - a[1]) * t];
  const from = da < 0 ? cut : a;
  const to = db < 0 ? cut : b;
  return `M${project(...from)}L${project(...to)}`;
};

const EXTENT = 40;

const groundGrid = (isMajor) => {
  let d = "";
  for (let i = -EXTENT * 10; i <= EXTENT * 10; i++) {
    if ((i % 10 === 0) !== isMajor) continue;
    const p = i / 10;
    d += clipLine([p, -EXTENT], [p, EXTENT]);
    d += clipLine([-EXTENT, p], [EXTENT, p]);
  }
  return d;
};

const PerspectiveView = () => (
  <View>
    <svg aria-hidden="true">
      <svg x="50%" y="50%" overflow="visible">
        <path d={groundGrid(false)} stroke="#7f8791" strokeOpacity="0.24" />
        <path d={groundGrid(true)} stroke="#6b727a" strokeOpacity="0.6" />
        <path d={clipLine([0, 0], [0, EXTENT])} stroke="#4a9150" strokeWidth="2" />
        <path d={clipLine([0, 0], [EXTENT, 0])} stroke="#a04246" strokeWidth="2" />
      </svg>
      <svg x="72" y="100%" overflow="visible">
        <path d="M0.5 -126V-72L53 -56M0.5 -72L28 -97" fill="none" stroke="#5d6065" />
        <AxisText x="5" y="-124">z</AxisText>
        <AxisText x="33" y="-98">y</AxisText>
        <AxisText x="59" y="-55">x</AxisText>
      </svg>
    </svg>
    <ViewLabel $on>Perspective</ViewLabel>
  </View>
);

/* ---------- panels ---------- */

const modesLeft = ["锁定格点", "正交", "平面模式"];
const modesRight = ["智慧轨迹", "操作轴", "建构历史"];

const stripTabs = [
  "标准",
  "工作平面",
  "设置视图",
  "显示",
  "选取",
  "工作视窗配置",
  "可见性",
  "变动",
  "曲线工具",
  "曲面工具",
  "实体工具",
  "细分工具",
  "网格工具",
  "渲染工具",
  "出图",
  "V7 的新功能",
];

const snaps = [
  "端点",
  "最近点",
  "点",
  "中点",
  "中心",
  "交点",
  "垂直",
  "Tangent",
  "四分点",
  "节点",
  "顶点",
  "曲线上",
  "曲面上",
  "多重曲面上",
  "网格上",
  "投影",
  "智慧轨迹",
];

const disabledSnaps = ["曲线上", "曲面上", "多重曲面上", "网格上"];

const layers = [
  { name: "默认", color: "#000000" },
  { name: "图…", color: "#d42000" },
  { name: "图…", color: "#8f42d6" },
  { name: "图…", color: "#0433ff" },
  { name: "图…", color: "#008f00" },
  { name: "图…", color: "#ffffff" },
];

const Header = () => {
  const [mode, setMode] = useState("智慧轨迹");
  const renderMode = (name) => (
    <ModeButton key={name} $on={mode === name} onClick={() => setMode(name)}>
      {name}
    </ModeButton>
  );

  return (
    <>
      <TitleBar>
        <Lights>
          <Light $color="#ff5f57" aria-label="Close" />
          <Light $color="#febc2e" aria-label="Minimize" />
          <Light $color="#28c840" aria-label="Zoom" />
        </Lights>
        <WindowTitle>未命名</WindowTitle>
      </TitleBar>
      <ModeBar>
        <PanelToggle $side="left" aria-label="Left panel" />
        <Modes $gap="32px" $start="88px">
          {modesLeft.map(renderMode)}
        </Modes>
        <Modes $gap="19px" $start="18px">
          {modesRight.map(renderMode)}
        </Modes>
        <ModeTools>
          <BareButton aria-label="Filter">
            <svg width="46" height="46" viewBox="0 0 46 46" fill="none" stroke="#6e6e70" strokeWidth="2">
              <ellipse cx="22" cy="9" rx="16" ry="4" />
              <path d="M6 9q1 6 12 19v14q4 3 8 0V28Q37 15 38 9M37 2h7v6M1 37v7h7" />
            </svg>
          </BareButton>
          <BareButton aria-label="Record history">
            <svg width="42" height="42" viewBox="0 0 42 42" fill="none" stroke="#b4b4b6" strokeWidth="2">
              <circle cx="19" cy="21" r="18" />
              <path d="M19 21.5h22" stroke="#7a7a7c" />
              <rect x="15" y="17" width="8" height="8" fill="#7a7a7c" stroke="none" />
            </svg>
          </BareButton>
          <BareButton aria-label="Object snap">
            <svg width="42" height="42" viewBox="0 0 42 42" fill="none" stroke="#7a7a7c" strokeWidth="2">
              <circle cx="21" cy="21" r="20" />
              <circle cx="21" cy="21" r="10" />
            </svg>
          </BareButton>
          <LayerField>
            <Swatch $color="#000" />
            <span>默认</span>
          </LayerField>
        </ModeTools>
        <PanelToggle $side="right" aria-label="Right panel" />
      </ModeBar>
    </>
  );
};

const Tools = () => {
  const [tab, setTab] = useState("V7 的新功能");
  return (
    <>
      <TabStrip>
        {stripTabs.map((name) => (
          <StripTab key={name} $on={tab === name} onClick={() => setTab(name)}>
            {name}
          </StripTab>
        ))}
      </TabStrip>
      <ToolStrip>
        {toolIcons.map(([name, art], i) => (
          <BareButton key={i} aria-label={name}>
            <IconSvg viewBox="0 0 48 48">{art}</IconSvg>
          </BareButton>
        ))}
      </ToolStrip>
    </>
  );
};

const LeftPanel = () => (
  <Sidebar>
    <SidebarHead />
    <CommandInput placeholder="指令" aria-label="指令" />
    <ScrollArea $height="226px">
      <ScrollBody>
        <ToolGrid>
          {sideIcons.map(([name, more, art]) => (
            <BareButton key={name} aria-label={name}>
              <IconSvg viewBox="0 0 48 48">
                {art}
                {more && <Drop y={39} />}
              </IconSvg>
            </BareButton>
          ))}
        </ToolGrid>
      </ScrollBody>
      <Track>
        <Thumb $size="87px" />
      </Track>
    </ScrollArea>
    <Divider />
    <ScrollArea>
      <ScrollBody>
        <SnapModes>
          <Field>
            <Radio name="snap-mode" defaultChecked />
            持续
          </Field>
          <Field>
            <Radio name="snap-mode" />
            单次
          </Field>
        </SnapModes>
        <SnapList>
          {snaps.map((name) => (
            <Field key={name} $height="40px" $dim={disabledSnaps.includes(name)}>
              <CheckBox
                defaultChecked={name === "智慧轨迹"}
                disabled={disabledSnaps.includes(name)}
              />
              {name}
            </Field>
          ))}
        </SnapList>
      </ScrollBody>
      <Track>
        <Thumb $size="737px" />
      </Track>
    </ScrollArea>
    <HorizontalTrack>
      <HorizontalThumb />
    </HorizontalTrack>
  </Sidebar>
);

const Viewports = () => {
  const [view, setView] = useState("Perspective");
  return (
    <Center>
      <ViewTabs>
        <LayoutButtons>
          <BareButton aria-label="Four views">
            <svg width="31" height="28" fill="none" stroke="#7fa9f5" strokeWidth="2">
              <path d="M1 1h29v26H1z" />
              <path d="M15 1v26M1 14h29" stroke="#2f74ea" />
              <path d="M3 3h5M17 3h5M3 16h5M17 16h5" stroke="#2f74ea" />
            </svg>
          </BareButton>
          <BareButton aria-label="Single view">
            <svg width="31" height="28" fill="none" stroke="#a5a5a5" strokeWidth="2">
              <path d="M1 1h29v26H1z" />
              <path d="M2 2h6" stroke="#777" />
            </svg>
          </BareButton>
        </LayoutButtons>
        {["Perspective", "Top", "Front", "Right", "图纸配置"].map((name) => (
          <ViewTab key={name} $on={view === name} onClick={() => setView(name)}>
            {name}
          </ViewTab>
        ))}
      </ViewTabs>
      <ViewGrid>
        <FlatView title="Top" major={98} up="y" across="x" />
        <PerspectiveView />
        <FlatView title="Front" major={106.4} up="z" across="x" />
        <FlatView title="Right" major={106.4} up="z" across="y" />
      </ViewGrid>
    </Center>
  );
};

const PropertiesPanel = () => {
  const titleId = useId();
  return (
    <>
      <PanelHead>
        <PanelTitle>
          <h2>属性: Viewport</h2>
          <GearButton aria-label="Panel options">
            <Gear />
            <Chevron />
          </GearButton>
        </PanelTitle>
        <PanelIcons>
          <BareButton aria-label="Camera">
            <IconSvg viewBox="0 0 48 48" style={{ stroke: "#3f86f5" }}>
              <path d="M2 13h12l5-7h12l5 7h10v29H2z" />
              <circle cx="24" cy="28" r="14" fill="#ededed" />
              <circle cx="24" cy="28" r="9" />
            </IconSvg>
          </BareButton>
          <BareButton aria-label="Material">
            <IconSvg viewBox="0 0 48 48">
              <rect x="3" y="5" width="42" height="37" />
              <rect x="7" y="10" width="34" height="27" stroke="#b9b9b9" />
              <rect x="11" y="14" width="26" height="19" stroke="#b9b9b9" />
            </IconSvg>
          </BareButton>
          <BareButton aria-label="Texture mapping">
            <IconSvg viewBox="0 0 48 48">
              <circle cx="37" cy="10" r="7" stroke="#9f9f9f" />
              <circle cx="27" cy="20" r="8" fill="#e9e9e9" stroke="#9f9f9f" />
              <circle cx="15" cy="32" r="11" fill="#e9e9e9" />
            </IconSvg>
          </BareButton>
        </PanelIcons>
      </PanelHead>
      <ScrollArea $height="472px">
        <ScrollBody>
          <Properties>
            <PropRow $height="36px">
              <label htmlFor={titleId}>标题:</label>
              <TextField id={titleId} defaultValue="Perspective" />
            </PropRow>
            <PropRow $height="60px">
              <span>大小:</span>
              <span>613 x 539</span>
            </PropRow>
            <Indent>
              <Field>
                <CheckBox />
                已锁定
              </Field>
            </Indent>
            <Rule $margin="22px 0 15px" />
            投影
            <Indent $pad="3px 0 0 42px">
              {["Parallel", "Perspective", "两点透视"].map((name) => (
                <Field key={name}>
                  <Radio name="projection" defaultChecked={name === "Perspective"} />
                  {name}
                </Field>
              ))}
            </Indent>
            <Rule $margin="44px 0 15px" />
            底色图案
            <Indent $pad="13px 0 15px 50px">
              <SelectBox $width="161px">
                <select aria-label="底色图案">
                  <option>选取...</option>
                </select>
                <UpDown />
              </SelectBox>
            </Indent>
            <Indent>
              <Field $dim>
                <CheckBox disabled />
                显示底色图案
              </Field>
            </Indent>
          </Properties>
        </ScrollBody>
        <Track>
          <Thumb $size="184px" />
        </Track>
      </ScrollArea>
    </>
  );
};

const LayerIcons = () => (
  <PanelIcons>
    <BareButton aria-label="图层">
      <IconSvg viewBox="0 0 48 48" style={{ stroke: "#1a73e8" }}>
        <path d="M2 20L24 6L46 20L24 34z" />
        <path d="M9 25L2 29L24 43L46 29L39 25" />
      </IconSvg>
    </BareButton>
    <BareButton aria-label="Layer states">
      <IconSvg viewBox="0 0 48 48">
        <path d="M28 32L24 34L2 20L24 6L46 20L41 23M9 25L2 29L24 43L28 40" />
        <path d="M29 23h12l6 6v19H29zM41 23v6h6" />
      </IconSvg>
    </BareButton>
    <BareButton aria-label="Notes">
      <IconSvg viewBox="0 0 48 48">
        <path d="M12 5h17l8 8v28H12zM29 5v8h8" />
      </IconSvg>
    </BareButton>
    <BareButton aria-label="Blocks">
      <IconSvg viewBox="0 0 48 48">
        <path d="M6 17L20 6L41 15V36L27 46L6 38zM6 17L27 25L41 15M27 25V46" />
      </IconSvg>
    </BareButton>
    <BareButton aria-label="History">
      <IconSvg viewBox="0 0 48 48">
        <path d="M11 39V12q0-5 4-5h27q4 0 4 6h-7q0-6-4-6M38 13v26q0 6-5 6H9q-4 0-4-4t4-4h22q-4 0-4 4t5 0v-4" />
      </IconSvg>
    </BareButton>
    <BareButton aria-label="Display">
      <IconSvg viewBox="0 0 48 48">
        <rect x="4" y="5" width="41" height="35" rx="2" />
        <path d="M8 9h33v25H8zM21 40l-2 5h12l-2-5M13 45h24" />
      </IconSvg>
    </BareButton>
    <BareButton aria-label="Help">
      <IconSvg viewBox="0 0 48 48">
        <circle cx="24" cy="25" r="19" />
        <text x="24" y="38" fontSize="36" textAnchor="middle" fill="#858585" stroke="none">
          ?
        </text>
      </IconSvg>
    </BareButton>
  </PanelIcons>
);

const LayersPanel = () => (
  <>
    <PanelHead>
      <PanelTitle>
        <h2>面板: 图层</h2>
        <GearButton aria-label="Panel options">
          <Gear />
          <Chevron />
        </GearButton>
      </PanelTitle>
      <LayerIcons />
    </PanelHead>
    <LayerPane>
      <LayerTable>
        <colgroup>
          {[114, 46, 46, 46, 60, 48, 114, 46, 58, 20].map((width, i) => (
            <col key={i} style={{ width }} />
          ))}
        </colgroup>
        <thead>
          <tr>
            <th>
              <HeadCell $pad="59px">…</HeadCell>
            </th>
            {["current", "on", "lock", "color", "material"].map((name) => (
              <th key={name} aria-label={name}>
                <HeadCell />
              </th>
            ))}
            <th>
              <HeadCell $pad="10px">线型</HeadCell>
            </th>
            <th aria-label="print color">
              <HeadCell />
            </th>
            <th>
              <HeadCell $pad="11px">…</HeadCell>
            </th>
            <th aria-label="more" />
          </tr>
        </thead>
        <tbody>
          {layers.map(({ name, color }, i) => (
            <tr key={color}>
              <td>
                <CellBox $align="flex-start" $pad="54px">
                  {name}
                </CellBox>
              </td>
              <td>
                <CellBox>
                  <Radio name="current-layer" defaultChecked={i === 0} aria-label={name} />
                </CellBox>
              </td>
              <td>
                <CellBox>
                  <Bulb dim={i === 0} />
                </CellBox>
              </td>
              <td>
                <CellBox>
                  <Lock dim={i === 0} />
                </CellBox>
              </td>
              <td>
                <CellBox>
                  <Swatch $color={color} />
                </CellBox>
              </td>
              <td>
                <CellBox $align="flex-start" $pad="3px">
                  <PrintDot />
                </CellBox>
              </td>
              <td>
                <CellBox $align="flex-start" $pad="8px">
                  <SelectBox $width="99px">
                    <select aria-label="线型">
                      <option>Conti...</option>
                    </select>
                    <UpDown />
                  </SelectBox>
                </CellBox>
              </td>
              <td>
                <CellBox>
                  <svg width="32" height="32" viewBox="0 0 32 32" aria-hidden="true">
                    <path d="M16 1L31 16L16 31L1 16z" fill={color} />
                    {color === "#ffffff" && (
                      <path d="M16 1L31 16L16 31" fill="none" stroke="#d5d5d5" />
                    )}
                  </svg>
                </CellBox>
              </td>
              <td>
                <CellBox $align="flex-start" $pad="9px">
                  <SelectBox $width="34px">
                    <select aria-label="打印线宽">
                      <option>...</option>
                    </select>
                    <UpDown />
                  </SelectBox>
                </CellBox>
              </td>
              <td />
            </tr>
          ))}
        </tbody>
      </LayerTable>
    </LayerPane>
    <PaneFoot>
      <StepGroup>
        <button aria-label="Add layer">
          <svg width="20" height="20" stroke="#6f6f71" strokeWidth="2">
            <path d="M1 10h18M10 1v18" />
          </svg>
        </button>
        <button aria-label="Remove layer">
          <svg width="20" height="20" stroke="#bdbdbf" strokeWidth="2">
            <path d="M1 10h18" />
          </svg>
        </button>
      </StepGroup>
      <GearButton $raised aria-label="Layer options">
        <Gear />
        <Chevron />
      </GearButton>
    </PaneFoot>
  </>
);

const Status = () => (
  <StatusBar>
    <BareButton aria-label="List">
      <svg width="26" height="20" stroke="#747474" strokeWidth="2" strokeLinecap="round">
        <path d="M7 2h18M7 10h18M7 18h18M1 2h1M1 10h1M1 18h1" />
      </svg>
    </BareButton>
    <StatusInfo>
      <span>Millimeters</span>
      <SelectBox $width="140px" $framed>
        <select aria-label="工作平面">
          <option>工作平面</option>
        </select>
        <UpDown color="#9a9a9a" />
      </SelectBox>
      <Coord $width="132px">X: 288.98</Coord>
      <Coord $width="138px">Y: -249.83</Coord>
      <Coord $width="138px">Z: 0.00</Coord>
    </StatusInfo>
  </StatusBar>
);

export default function App() {
  return (
    <>
      <GlobalStyle />
      <Paints />
      <Window>
        <Header />
        <Tools />
        <Body>
          <LeftPanel />
          <Viewports />
          <Inspector>
            <PropertiesPanel />
            <Divider />
            <LayersPanel />
          </Inspector>
        </Body>
        <Status />
      </Window>
    </>
  );
}
